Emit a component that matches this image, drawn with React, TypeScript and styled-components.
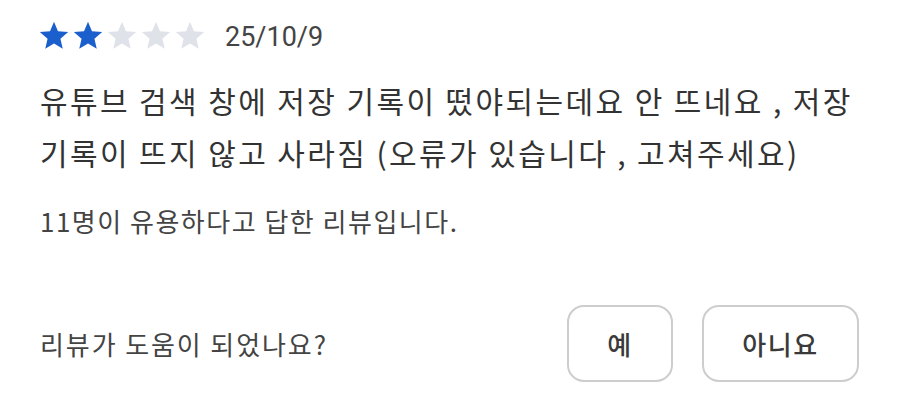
import styled, { createGlobalStyle } from 'styled-components'

const Global = createGlobalStyle`
  body {
    margin: 0;
    background: #ffffff;
    font-family: Roboto, "Noto Sans CJK KR", sans-serif;
  }
`

const Wrap = styled.div`
  width: 900px;
  height: 413px;
  box-sizing: border-box;
  padding: 19px 41px 0 40px;
  display: flex;
  flex-direction: column;
`

const Meta = styled.div`
  display: flex;
  align-items: center;
  height: 34px;
`

const Stars = styled.div`
  display: flex;
  margin-left: -3px;
  margin-right: 18px;
`

const Star = styled.svg<{ $on: boolean }>`
  width: 34px;
  height: 34px;
  fill: ${p => (p.$on ? '#1b5fcc' : '#dfe3e9')};
`

const Date = styled.span`
  font-size: 27px;
  color: #444;
  margin-top: 2px;
`

const Body = styled.p`
  margin: 21px 0 0;
  font-size: 30px;
  letter-spacing: 2.4px;
  line-height: 52px;
  color: #333;
  word-break: keep-all;
  font-family: "Noto Sans CJK KR", sans-serif;
`

const Helpful = styled.div`
  margin-top: 24px;
  font-size: 26px;
  letter-spacing: 1.5px;
  color: #444;
  font-family: "Noto Sans CJK KR", sans-serif;
`

const Footer = styled.div`
  margin-top: 66px;
  display: flex;
  align-items: center;
  justify-content: space-between;
`

const Question = styled.span`
  font-size: 26px;
  letter-spacing: 1.9px;
  color: #444;
  font-family: "Noto Sans CJK KR", sans-serif;
`

const Buttons = styled.div`
  display: flex;
  gap: 29px;
`

const Btn = styled.button<{ $w: number }>`
  width: ${p => p.$w}px;
  height: 77px;
  border: 2px solid #cdcdcd;
  border-radius: 17px;
  background: #fff;
  font-family: "Noto Sans CJK KR", sans-serif;
  font-size: 26px;
  letter-spacing: 1.5px;
  font-weight: 500;
  color: #3a3a3a;
  padding: 0;
`

const starPath =
  'M12 17.27L18.18 21l-1.64-7.03L22 9.24l-7.19-.61L12 2 9.19 8.63 2 9.24l5.46 4.73L5.82 21z'

export default function App() {
  const rating = 2
  return (
    <Wrap>
      <Global />
      <Meta>
        <Stars>
          {[0, 1, 2, 3, 4].map(i => (
            <Star key={i} $on={i < rating} viewBox="0 0 24 24">
              <path d={starPath} />
            </Star>
          ))}
        </Stars>
        <Date>25/10/9</Date>
      </Meta>
      <Body>
        유튜브 검색 창에 저장 기록이 떴야되는데요 안 뜨네요 , 저장 기록이 뜨지 않고 사라짐 (오류가 있습니다 , 고쳐주세요)
      </Body>
      <Helpful>11명이 유용하다고 답한 리뷰입니다.</Helpful>
      <Footer>
        <Question>리뷰가 도움이 되었나요?</Question>
        <Buttons>
          <Btn $w={106}>예</Btn>
          <Btn $w={157}>아니요</Btn>
        </Buttons>
      </Footer>
    </Wrap>
  )
}
